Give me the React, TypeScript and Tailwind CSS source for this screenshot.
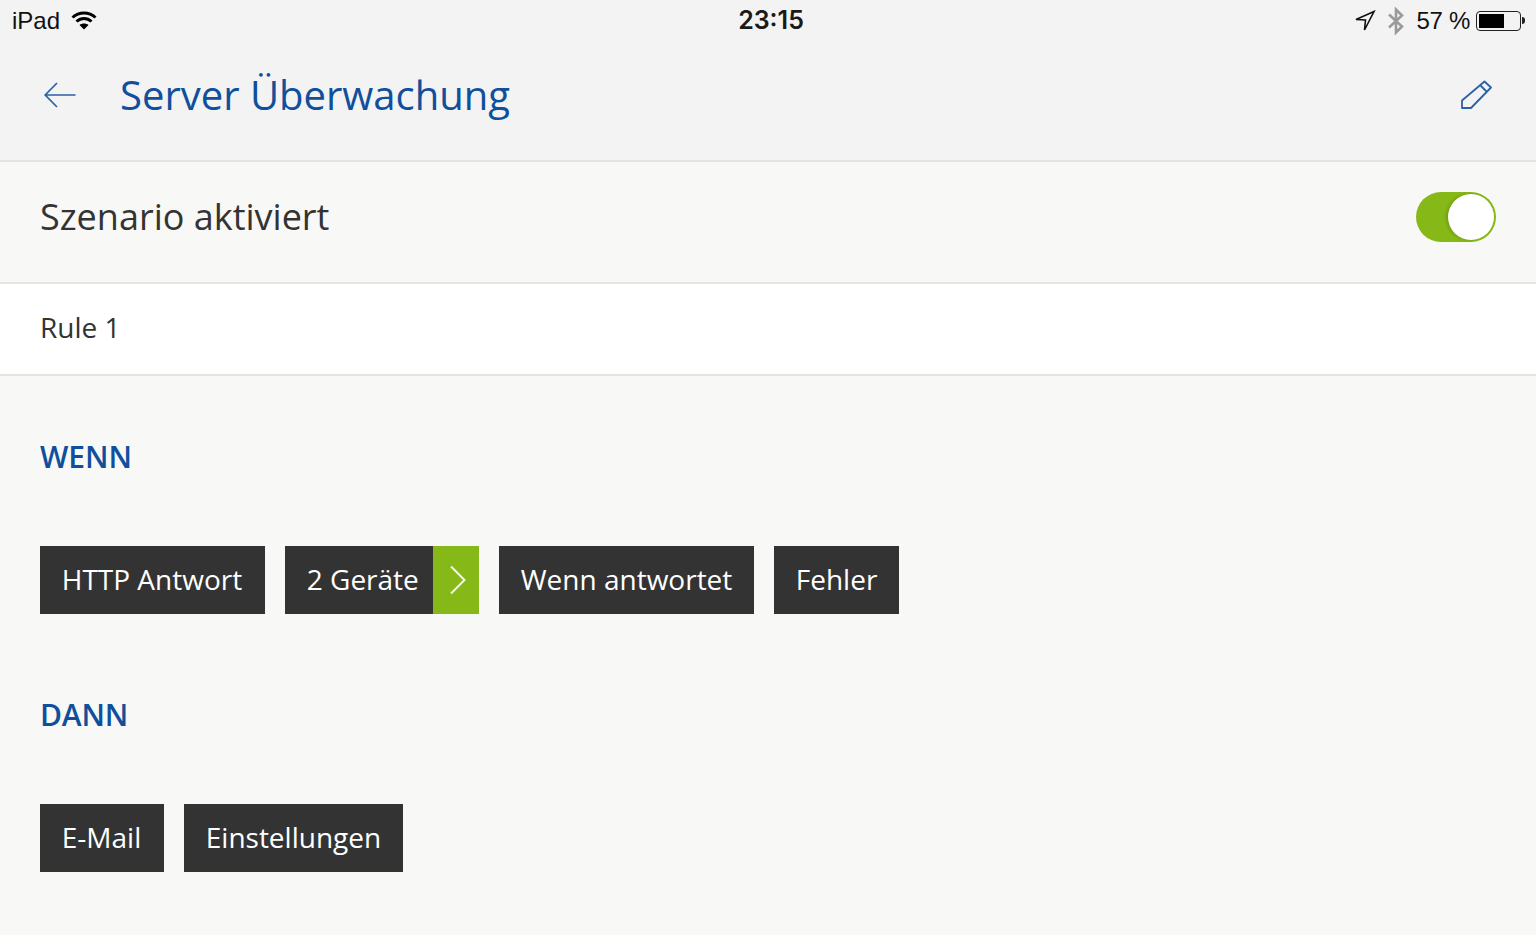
const OPEN = "font-['Open_Sans',sans-serif]";
const SYS = "font-['Liberation_Sans',sans-serif]";

function Chip({ label, width, arrow }: { label: string; width: string; arrow?: boolean }) {
  return (
    <div className={`flex h-[68px] items-stretch bg-[#333333] text-[28px] text-white ${width}`}>
      <span className="flex flex-1 items-center pb-[2px] pl-[21.75px]">{label}</span>
      {arrow && (
        <span className="flex w-[46px] items-center justify-center bg-[#86b817]">
          <svg className="ml-[4px]" width="18" height="30" viewBox="0 0 18 30" fill="none" stroke="#f4f8e6" strokeWidth="2">
            <path d="M2 1.500 15.500 15 2 28.500" />
          </svg>
        </span>
      )}
    </div>
  );
}

function StatusBar() {
  return (
    <div className={`flex h-[41px] items-center justify-between text-[24px] text-[#111] ${SYS}`}>
      <div className="flex w-[400px] items-center pl-3">
        <span>iPad</span>
        <svg className="ml-[11px]" width="26" height="20" viewBox="0 0 26 20" fill="none" stroke="#000" strokeWidth="3">
          <path d="M1.500 6.500C8 .5 18 .5 24.500 6.500" />
          <path d="M5.500 10.500c4.500-4 10.500-4 15 0" />
          <path d="M13 18.500 8.500 14c2.500-2 6.500-2 9 0Z" fill="#000" stroke="none" />
        </svg>
      </div>
      <span className="ml-[6px] font-['Inter',sans-serif] text-[25px] font-semibold text-[#1a1a1a]">23:15</span>
      <div className="flex w-[400px] items-center justify-end pr-[11px]">
        <svg width="22" height="22" viewBox="0 0 22 22" fill="none" stroke="#111" strokeWidth="1.600" strokeLinejoin="miter">
          <path d="M20 1.500 2 9.500l9.500.5L10.500 20Z" />
        </svg>
        <svg className="ml-[11px]" width="18" height="28" viewBox="0 0 18 28" fill="none" stroke="#9a9a9a" strokeWidth="2.600">
          <path d="M2 7.500 15 19.500 9 25.500V2.500l6 6L2 20.500" />
        </svg>
        <span className="ml-[11px] tracking-[-0.3px]">57 %</span>
        <div className="ml-[6px] flex h-[20px] w-[45px] items-center rounded-[4px] border border-[#222] p-[2px]">
          <div className="h-full w-[25px] bg-black" />
        </div>
        <div className="ml-[1px] h-[7px] w-[3px] rounded-r-sm bg-[#222]" />
      </div>
    </div>
  );
}

export default function App() {
  return (
    <div className={`h-[935px] w-full overflow-hidden bg-[#f8f8f6] ${OPEN}`}>
      <div className="h-[162px] border-b-2 border-[#e4e4e4] bg-[#f3f3f3]">
        <StatusBar />
        <div className="flex h-[108px] items-center justify-between pl-[44px] pr-[44px]">
          <div className="flex items-center">
            <svg width="32" height="26" viewBox="0 0 32 26" fill="none" stroke="#2a62a5" strokeWidth="1.700">
              <path d="M13 1 1.200 13 13 25M1.200 13H31.500" />
            </svg>
            <h1 className="ml-[44px] text-[40px] leading-none text-[#0f4f9c]">Server Überwachung</h1>
          </div>
          <svg className="mt-[2px]" width="32" height="32" viewBox="0 0 32 32" fill="none" stroke="#2a62a5" strokeWidth="1.800" strokeLinejoin="round">
            <path d="M24.500 1.500 31 7.500 11 28H2v-7.500ZM20.500 5.500l6.500 6.500" />
          </svg>
        </div>
      </div>

      <div className="flex h-[122px] items-center justify-between border-b-2 border-[#e4e4e2] pb-[10px] pl-10 pr-10">
        <span className="text-[36px] text-[#333]">Szenario aktiviert</span>
        <div className="flex h-[50px] w-[80px] justify-end rounded-full bg-[#86b817] p-[2px]">
          <div className="h-[46px] w-[46px] rounded-full bg-white shadow-[-2px_0_3px_rgba(0,0,0,0.15)]" />
        </div>
      </div>

      <div className="flex h-[92px] items-center border-b-2 border-[#e4e4e2] bg-white pb-[4px] pl-10 text-[28px] text-[#333]">
        Rule 1
      </div>

      <div className="pl-10">
        <h2 className="mt-[59px] h-[44px] text-[30px] font-semibold leading-[44px] text-[#0f4f9c]">WENN</h2>
        <div className="mt-[67px] flex gap-5">
          <Chip label="HTTP Antwort" width="w-[225px]" />
          <Chip label="2 Geräte" width="w-[194px]" arrow />
          <Chip label="Wenn antwortet" width="w-[255px]" />
          <Chip label="Fehler" width="w-[125px]" />
        </div>
        <h2 className="mt-[79px] h-[44px] text-[30px] font-semibold leading-[44px] tracking-[-0.2px] text-[#0f4f9c]">DANN</h2>
        <div className="mt-[67px] flex gap-5">
          <Chip label="E-Mail" width="w-[124px]" />
          <Chip label="Einstellungen" width="w-[219px]" />
        </div>
      </div>
    </div>
  );
}
